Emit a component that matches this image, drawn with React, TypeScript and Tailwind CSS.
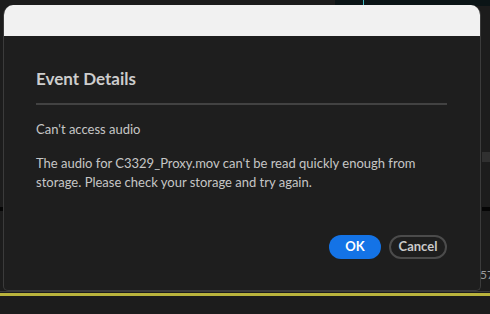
import React from "react";

export default function App() {
  return (
    <div
      className="relative w-[490px] h-[314px] overflow-hidden bg-[#1c1c1c]"
      style={{ fontFamily: "Lato, 'Noto Sans', sans-serif" }}
    >
      {/* background bits behind the dialog */}
      <div className="absolute left-[335px] top-0 h-[6px] w-[155px] bg-[#0b1416]" />
      <div className="absolute left-[363px] top-0 h-[6px] w-px bg-[#3fb6c0]" />
      <div className="absolute left-0 top-[291px] h-px w-[490px] bg-[#3a3a3a]" />
      <div className="absolute left-0 top-[293px] h-[3px] w-[490px] bg-[#b9b33c]" />
      <div className="absolute left-[482px] top-[152px] h-[10px] w-[8px] bg-[#303030]" />
      <div className="absolute left-[482px] top-[207px] h-[4px] w-[8px] bg-[#050505]" />
      <div className="absolute left-0 top-[207px] h-[4px] w-[3px] bg-[#050505]" />
      <span className="absolute left-[480px] top-[266px] text-[12px] text-[#9a9a9a]">57</span>

      <div className="relative ml-[3px] mt-[5px] flex h-[286px] w-[478px] flex-col overflow-hidden rounded-t-[10px] rounded-b-[5px] border-x border-b border-[#3b3b3b] bg-[#1e1e1e]">
        <div className="h-[31px] shrink-0 bg-[#f1f1f1]" />
        <div className="flex flex-1 flex-col px-[32px] pt-[31px]">
          <h2 className="text-[17px] font-bold leading-[24px] text-[#cdcdcd]">Event Details</h2>
          <div className="mt-[12px] h-[2px] w-[411px] bg-[#424242]" />
          <p className="mt-[15px] text-[13px] leading-[19px] text-[#c6c6c6]">Can't access audio</p>
          <p className="mt-[15px] w-[400px] text-[13px] leading-[19px] text-[#c6c6c6]">
            The audio for C3329_Proxy.mov can't be read quickly enough from storage. Please check your
            storage and try again.
          </p>
          <div className="mt-auto mb-[31px] flex justify-end gap-[8px] pr-[1px]">
            <button className="h-[24px] w-[52px] rounded-full bg-[#1473e6] text-[13px] font-bold text-white">
              OK
            </button>
            <button className="h-[24px] w-[58px] rounded-full border-2 border-[#4b4b4b] text-[13px] font-bold text-[#cacaca]">
              Cancel
            </button>
          </div>
        </div>
      </div>
    </div>
  );
}
